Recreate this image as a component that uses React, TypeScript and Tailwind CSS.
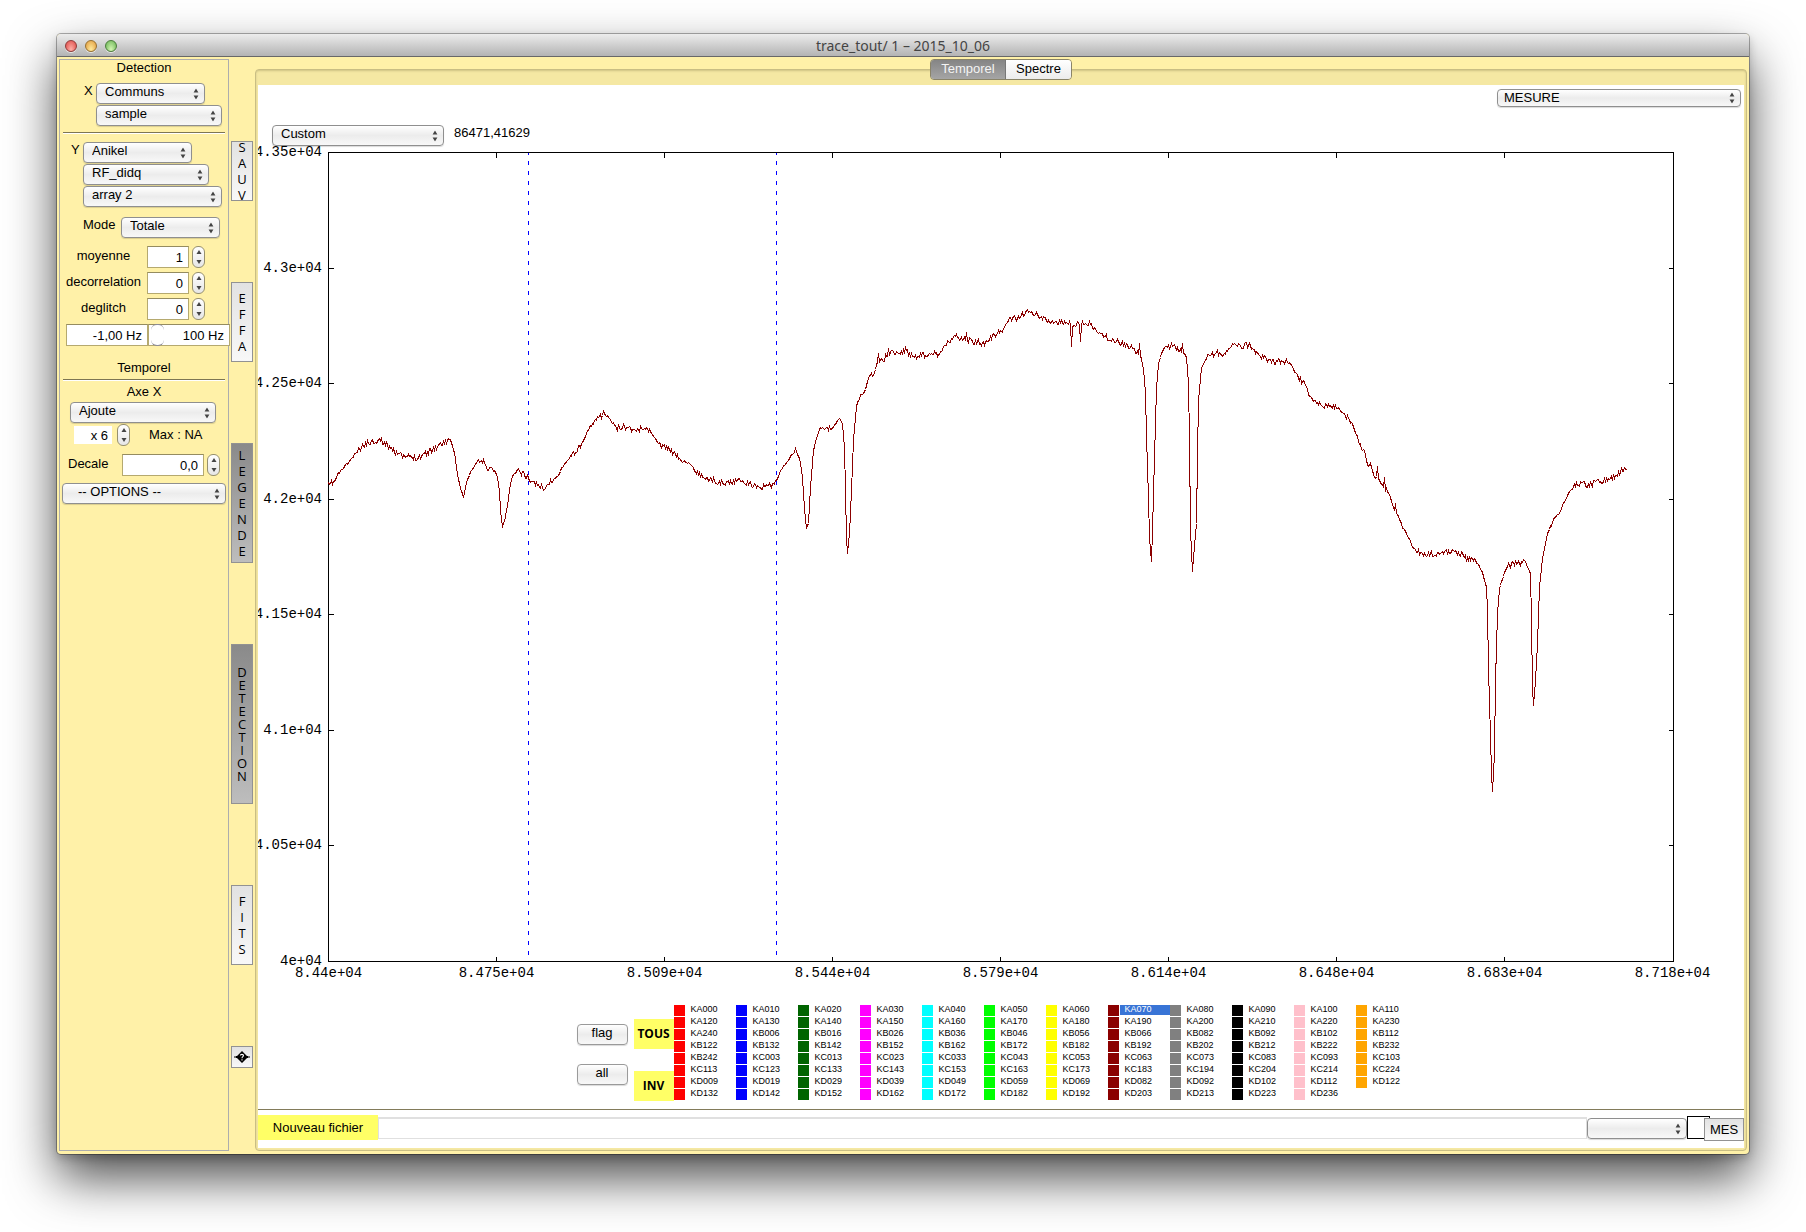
import type { ReactNode } from "react";

const xLabels = ["8.44e+04", "8.475e+04", "8.509e+04", "8.544e+04", "8.579e+04", "8.614e+04", "8.648e+04", "8.683e+04", "8.718e+04"];
const yLabels = ["4.35e+04", "4.3e+04", "4.25e+04", "4.2e+04", "4.15e+04", "4.1e+04", "4.05e+04", "4e+04"];

// plot frame, in chart units
const LEFT = 328.5;
const RIGHT = 1673.5;
const TOP = 152.5;
const BOTTOM = 961.5;

const samples: [number, number][] = [
  [329, 485], [335, 481], [339, 473], [349, 462], [358, 451], [366, 443], [380, 439], [383, 441], [393, 448], [402, 456],
  [418, 457], [431, 450], [448, 440], [452, 443], [455, 452], [458, 474], [461, 488], [464, 497], [467, 482], [472, 470],
  [478, 461], [485, 463], [488, 468], [495, 469], [498, 477], [500, 490], [501, 510], [503, 526], [505, 521], [508, 505],
  [511, 483], [514, 474], [518, 469], [525, 474], [534, 483], [545, 488], [550, 482], [558, 477], [562, 467], [574, 452],
  [581, 447], [588, 431], [597, 418], [605, 413], [610, 419], [617, 427], [628, 426], [636, 430], [647, 427], [653, 434],
  [661, 445], [669, 448], [680, 459], [687, 461], [697, 472], [708, 478], [722, 483], [741, 480], [756, 486], [766, 487],
  [775, 483], [783, 467], [796, 449], [801, 462], [803, 477], [805, 508], [807, 529], [809, 523], [811, 487], [814, 450],
  [817, 437], [821, 428], [832, 429], [840, 418], [843, 423], [845, 447], [846, 490], [847, 537], [848, 553], [850, 533],
  [852, 490], [854, 440], [857, 405], [861, 396], [863, 394], [866, 389], [869, 377], [874, 375], [878, 362], [885, 358],
  [892, 352], [907, 351], [912, 356], [933, 353], [940, 353], [947, 343], [955, 336], [968, 339], [985, 344], [997, 333],
  [1003, 331], [1008, 320], [1013, 318], [1023, 315], [1029, 311], [1042, 317], [1050, 322], [1067, 322], [1071, 324],
  [1072, 346], [1073, 325], [1079, 323], [1080, 325], [1081, 341], [1082, 324], [1090, 323], [1100, 333], [1112, 340],
  [1122, 342], [1135, 349], [1141, 355], [1144, 368], [1146, 392], [1147, 436], [1149, 497], [1150, 537], [1152, 561],
  [1153, 530], [1155, 457], [1157, 388], [1159, 363], [1163, 350], [1173, 344], [1183, 350], [1187, 357], [1189, 383],
  [1190, 440], [1191, 530], [1193, 571], [1194, 557], [1197, 523], [1198, 455], [1199, 400], [1202, 368], [1207, 357],
  [1212, 353], [1218, 353], [1223, 357], [1230, 347], [1235, 344], [1242, 347], [1247, 343], [1257, 353], [1263, 356],
  [1270, 361], [1287, 361], [1293, 367], [1298, 376], [1305, 383], [1310, 395], [1317, 403], [1338, 407], [1348, 418],
  [1352, 422], [1357, 435], [1362, 447], [1365, 450], [1368, 465], [1371, 463], [1375, 477], [1378, 476], [1382, 484],
  [1386, 490], [1390, 494], [1394, 507], [1397, 512], [1403, 527], [1415, 549], [1425, 554], [1438, 553], [1448, 551],
  [1462, 553], [1468, 558], [1475, 559], [1483, 572], [1487, 587], [1488, 610], [1489, 668], [1491, 735], [1492, 773],
  [1493, 791], [1495, 753], [1496, 680], [1498, 613], [1500, 588], [1503, 578], [1507, 567], [1513, 563], [1520, 563],
  [1525, 559], [1528, 567], [1531, 573], [1532, 620], [1533, 687], [1534, 705], [1536, 680], [1538, 643], [1540, 587],
  [1543, 558], [1548, 533], [1555, 518], [1560, 512], [1567, 497], [1576, 483], [1583, 483], [1588, 485], [1595, 482],
  [1610, 480], [1617, 474], [1623, 469], [1628, 468],
];

const spikes: Record<number, number> = {
  484: -6, 535: -5, 879: -7, 889: -9, 906: -6, 967: -6, 1140: -10, 1183: -8, 1378: -9, 1385: -12, 1396: -7, 1467: 5,
};

function buildTrace() {
  let seed = 11;
  const rand = () => {
    seed = (seed * 16807) % 2147483647;
    return seed / 2147483647;
  };
  let d = "";
  for (let i = 0; i < samples.length - 1; i++) {
    const [x0, y0] = samples[i];
    const [x1, y1] = samples[i + 1];
    const slope = Math.abs((y1 - y0) / (x1 - x0));
    const amp = slope > 3 ? 0 : slope > 1 ? 3 : 6;
    for (let x = x0; x < x1; x++) {
      const y = y0 + ((y1 - y0) * (x - x0)) / (x1 - x0) + (rand() - 0.5) * amp + (spikes[x] ?? 0);
      d += `${d ? "L" : "M"}${x - 0.5} ${Math.round(y) + 0.5}`;
    }
  }
  return d;
}

const trace = buildTrace();

const legend = [
  { color: "bg-[#ff0000]", names: ["KA000", "KA120", "KA240", "KB122", "KB242", "KC113", "KD009", "KD132"] },
  { color: "bg-[#0000ff]", names: ["KA010", "KA130", "KB006", "KB132", "KC003", "KC123", "KD019", "KD142"] },
  { color: "bg-[#006400]", names: ["KA020", "KA140", "KB016", "KB142", "KC013", "KC133", "KD029", "KD152"] },
  { color: "bg-[#ff00ff]", names: ["KA030", "KA150", "KB026", "KB152", "KC023", "KC143", "KD039", "KD162"] },
  { color: "bg-[#00ffff]", names: ["KA040", "KA160", "KB036", "KB162", "KC033", "KC153", "KD049", "KD172"] },
  { color: "bg-[#00ff00]", names: ["KA050", "KA170", "KB046", "KB172", "KC043", "KC163", "KD059", "KD182"] },
  { color: "bg-[#ffff00]", names: ["KA060", "KA180", "KB056", "KB182", "KC053", "KC173", "KD069", "KD192"] },
  { color: "bg-[#8b0000]", names: ["KA070", "KA190", "KB066", "KB192", "KC063", "KC183", "KD082", "KD203"] },
  { color: "bg-[#808080]", names: ["KA080", "KA200", "KB082", "KB202", "KC073", "KC194", "KD092", "KD213"] },
  { color: "bg-black", names: ["KA090", "KA210", "KB092", "KB212", "KC083", "KC204", "KD102", "KD223"] },
  { color: "bg-[#ffc0cb]", names: ["KA100", "KA220", "KB102", "KB222", "KC093", "KC214", "KD112", "KD236"] },
  { color: "bg-[#ffa500]", names: ["KA110", "KA230", "KB112", "KB232", "KC103", "KC224", "KD122"] },
];

function Select({ id, label, value, className = "", height = "h-[21px]", pad = "pl-2" }: {
  id: string;
  label?: string;
  value: string;
  className?: string;
  height?: string;
  pad?: string;
}) {
  return (
    <div className={`relative ${className}`}>
      <select
        id={id}
        aria-label={label}
        defaultValue={value}
        className={`block w-full ${height} ${pad} appearance-none rounded border border-[#8f8f8f] bg-linear-to-b from-white via-[#ececec] to-[#f8f8f8] pb-1 text-[13px] leading-4 shadow-[0_1px_1px_rgba(0,0,0,0.15)]`}
      >
        <option>{value}</option>
      </select>
      <svg viewBox="0 0 6 11" className="pointer-events-none absolute right-1.5 top-1/2 h-[11px] w-1.5 -translate-y-1/2" fill="#444">
        <path d="M3 0 5.4 4H.6zM3 11 .6 7h4.8z" />
      </svg>
    </div>
  );
}

function Stepper({ label }: { label: string }) {
  return (
    <span className="flex h-[22px] w-[13px] flex-col overflow-hidden rounded-md border border-[#96906f] bg-linear-to-b from-white to-[#e6e6e6]">
      <button aria-label={`${label} +`} className="flex flex-1 items-center justify-center">
        <svg viewBox="0 0 6 4" className="h-1 w-1.5" fill="#444"><path d="M3 0l2.5 4h-5z" /></svg>
      </button>
      <button aria-label={`${label} -`} className="flex flex-1 items-center justify-center">
        <svg viewBox="0 0 6 4" className="h-1 w-1.5" fill="#444"><path d="M3 4 .5 0h5z" /></svg>
      </button>
    </span>
  );
}

const field = "h-[22px] border border-[#b5a96f] border-t-[#958c60] bg-white pr-[5px] text-right text-[13px] leading-4";

function NumberRow({ id, value }: { id: string; value: string }) {
  return (
    <div className="flex items-center gap-[3px]">
      <label htmlFor={id} className="flex w-[84px] justify-center pb-0.5 pl-[3px]">{id}</label>
      <input id={id} defaultValue={value} className={`${field} w-[42px]`} />
      <Stepper label={id} />
    </div>
  );
}

function Rule() {
  return <div className="mx-[3px] border-b border-t border-b-white border-t-[#7d7653]" />;
}

function SideTab({ text, className, pitch = "leading-4", pressed = false }: {
  text: string;
  className: string;
  pitch?: string;
  pressed?: boolean;
}) {
  const fill = pressed ? "from-[#8a8a8a] to-[#bdbdbd]" : "from-[#e2e2e2] to-[#f8f8f8]";
  return (
    <button
      aria-label={text}
      aria-pressed={pressed}
      className={`flex w-[22px] shrink-0 flex-col items-center justify-center overflow-hidden border border-[#929292] bg-linear-to-b font-['Open_Sans',sans-serif] text-[13px] ${fill} ${pitch} ${className}`}
    >
      {text.split("").map((c, i) => (
        <span key={i}>{c}</span>
      ))}
    </button>
  );
}

function PushButton({ children }: { children: ReactNode }) {
  return (
    <button className="h-[21px] w-[51px] rounded border border-[#9a9a9a] bg-linear-to-b from-white via-[#ececec] to-[#f8f8f8] pb-1 text-[13px] leading-4 shadow-[0_1px_1px_rgba(0,0,0,0.15)]">
      {children}
    </button>
  );
}

function TitleBar() {
  const light = "size-3 rounded-full border shadow-[0_1px_0_rgba(255,255,255,0.6)]";
  return (
    <header className="relative flex h-[23px] items-center rounded-t border-b border-[#686868] bg-linear-to-b from-[#ececec] to-[#b4b4b4] px-2 pt-px">
      <div className="flex gap-2">
        <button aria-label="Fermer" className={`${light} border-[#8e3b39] bg-radial-[at_50%_85%] from-[#ffb1a8] to-[#dc4644]`} />
        <button aria-label="Réduire" className={`${light} border-[#96702f] bg-radial-[at_50%_85%] from-[#ffeb9c] to-[#e0983a]`} />
        <button aria-label="Agrandir" className={`${light} border-[#4c7c3c] bg-radial-[at_50%_85%] from-[#d5f7b4] to-[#65b150]`} />
      </div>
      <h1 className="absolute inset-x-0 top-0 text-center font-['Noto_Sans',sans-serif] text-sm leading-6 text-[#444]">
        trace_tout/ 1 – 2015_10_06
      </h1>
    </header>
  );
}

function Sidebar() {
  return (
    <aside className="w-[170px] shrink-0 border border-[#adadad] leading-4">
      <h2 className="text-center">Detection</h2>
      <div className="mt-[7px] flex pl-6">
        <label htmlFor="x-group" className="w-3">X</label>
        <Select id="x-group" value="Communs" className="w-[109px]" />
      </div>
      <Select id="x-name" label="X variable" value="sample" className="ml-9 mt-px w-[126px]" />
      <div className="mt-1.5"><Rule /></div>
      <div className="mt-2 flex pl-[11px]">
        <label htmlFor="y-group" className="w-3">Y</label>
        <Select id="y-group" value="Anikel" className="w-[109px]" />
      </div>
      <Select id="y-name" label="Y variable" value="RF_didq" className="ml-[23px] mt-px w-[126px]" />
      <Select id="y-array" label="Y array" value="array 2" className="ml-[23px] mt-px w-[139px]" />
      <div className="mt-2.5 flex pl-[23px]">
        <label htmlFor="mode" className="w-[38px]">Mode</label>
        <Select id="mode" value="Totale" className="w-[99px]" />
      </div>
      <div className="mt-2 flex flex-col gap-1">
        <NumberRow id="moyenne" value="1" />
        <NumberRow id="decorrelation" value="0" />
        <NumberRow id="deglitch" value="0" />
      </div>
      <div className="relative ml-1.5 mt-1 flex">
        <input aria-label="Frequence min" defaultValue="-1,00 Hz" className={`${field} w-[82px]`} />
        <input aria-label="Frequence max" defaultValue="100 Hz" className={`${field} w-[82px]`} />
        <span className="pointer-events-none absolute left-[85px] h-[22px] w-[13px] rounded-md border-y border-[#8b8b9b]" />
      </div>
      <h2 className="mt-3.5 text-center">Temporel</h2>
      <div className="mt-[3px]"><Rule /></div>
      <h3 className="mt-[3px] text-center">Axe X</h3>
      <Select id="axe-x" label="Axe X" value="Ajoute" className="ml-2.5 mt-0.5 w-[146px]" />
      <div className="mt-px flex items-center pl-3.5">
        <input aria-label="Facteur" defaultValue="x 6" className="h-[18px] w-[38px] bg-white pr-1 text-right" />
        <span className="ml-[5px]"><Stepper label="Facteur" /></span>
        <span className="ml-[19px]">Max : NA</span>
      </div>
      <div className="mt-2 flex items-center pl-2">
        <label htmlFor="decale" className="w-[54px] pb-0.5">Decale</label>
        <input id="decale" defaultValue="0,0" className={`${field} w-[82px]`} />
        <span className="ml-[3px]"><Stepper label="Decale" /></span>
      </div>
      <Select id="options" label="Options" value="-- OPTIONS --" className="mx-0.5 mt-[7px]" pad="pl-[15px]" />
    </aside>
  );
}

function SideTabs() {
  return (
    <nav className="flex w-[22px] shrink-0 flex-col">
      <SideTab text="SAUV" className="mt-[82px] h-[60px]" />
      <SideTab text="EFFA" className="mt-[81px] h-20" />
      <SideTab text="LEGENDE" className="mt-[81px] h-[120px]" pressed />
      <SideTab text="DETECTION" className="mt-[81px] h-40" pitch="leading-[13px]" pressed />
      <SideTab text="FITS" className="mt-[81px] h-20" />
      <button aria-label="Aide" className="mt-[81px] flex h-[22px] items-center justify-center border border-[#929292] bg-linear-to-b from-[#e2e2e2] to-[#f8f8f8]">
        <svg viewBox="0 0 16 12" className="h-3 w-4">
          <path d="M8 0l6 6-6 6-6-6zM0 5.5h1v1H0zM15 5.5h1v1h-1zM1.5 5h13v2h-13z" />
          <path d="M6.3 4.5C6.5 3 9.5 3 9.5 4.6 9.5 5.7 8 5.7 8 7.2M8 8.2v1.2" fill="none" stroke="#fff" strokeWidth="1.1" />
        </svg>
      </button>
    </nav>
  );
}

function Chart() {
  const dx = 168;
  const dy = (BOTTOM - TOP) / (yLabels.length - 1);
  return (
    <svg viewBox="258 146 1486 836" className="block w-full font-['Liberation_Mono',monospace] text-[14px]">
      <g shapeRendering="crispEdges" fill="none" stroke="#000">
        <rect x={LEFT} y={TOP} width={RIGHT - LEFT} height={BOTTOM - TOP} />
        {xLabels.slice(1, -1).map((label, i) => {
          const x = LEFT + dx * (i + 1);
          return <path key={label} d={`M${x} ${TOP}v5M${x} ${BOTTOM}v-5`} />;
        })}
        {yLabels.slice(1, -1).map((label, i) => {
          const y = Math.floor(TOP + dy * (i + 1)) + 0.5;
          return <path key={label} d={`M${LEFT} ${y}h5M${RIGHT} ${y}h-5`} />;
        })}
        <path d="M528.5 153V961M776.5 153V961" stroke="#0000ff" strokeDasharray="4 6" strokeDashoffset="2" />
        <path d={trace} stroke="#8b0000" />
      </g>
      {xLabels.map((label, i) => (
        <text key={label} x={LEFT + dx * i} y="977" textAnchor="middle">{label}</text>
      ))}
      {yLabels.map((label, i) => (
        <text key={label} x="322" y={Math.floor(TOP + dy * i) + 4} textAnchor="end">{label}</text>
      ))}
    </svg>
  );
}

function Legend() {
  return (
    <section className="mt-[23px] flex h-24 justify-center pr-2">
      <div className="mr-1.5 flex flex-col gap-[19px] pt-[19px]">
        <PushButton>flag</PushButton>
        <PushButton>all</PushButton>
      </div>
      <div className="flex flex-col gap-[22px] pt-3.5 font-['Open_Sans',sans-serif] text-xs font-bold">
        <button className="h-[30px] w-10 bg-[#ffff66]">TOUS</button>
        <button className="h-[30px] w-10 bg-[#ffff66]">INV</button>
      </div>
      <div className="flex">
        {legend.map(({ color, names }) => (
          <ul key={color} className="flex w-[62px] flex-col gap-px text-[9px] leading-[9px]">
            {names.map((name) => (
              <li key={name} className="flex h-[11px]">
                <span className={`mr-px w-[11px] ${color}`} />
                <span className={name === "KA070" ? "h-2.5 flex-1 bg-[#3874d6] pl-[5px] text-white" : "flex-1 pl-[5px]"}>
                  {name}
                </span>
              </li>
            ))}
          </ul>
        ))}
      </div>
    </section>
  );
}

function FileBar() {
  return (
    <footer className="mt-2 flex h-[39px] items-start border-t border-[#827b5a] pt-[5px]">
      <button className="h-[25px] w-[120px] bg-[#ffff66] text-[13px]">Nouveau fichier</button>
      <input aria-label="Fichier" className="mt-0.5 h-[22px] flex-1 border border-t-2 border-[#e0e0e0] bg-white px-1" />
      <Select id="file-type" label="Type" value="" className="mt-[3px] w-[100px]" />
      <div className="mt-px h-[23px] w-[23px] border border-black bg-white" />
      <button className="relative -ml-1.5 mt-[3px] h-[23px] w-10 border border-[#929292] bg-linear-to-b from-[#e2e2e2] to-[#f8f8f8] text-[13px]">MES</button>
    </footer>
  );
}

export default function App() {
  return (
    <div className="min-h-screen bg-white px-[57px] pb-[79px] pt-[34px] font-['Liberation_Sans',sans-serif] text-[13px] text-black">
      <main className="rounded bg-[#fff1a8] shadow-[0_0_0_1px_rgba(0,0,0,0.3),0_24px_50px_rgba(0,0,0,0.7),0_4px_10px_rgba(0,0,0,0.2)]">
        <TitleBar />
        <div className="flex gap-0.5 px-0.5 pb-[3px] pt-0.5">
          <Sidebar />
          <SideTabs />
          <div className="relative flex min-w-0 flex-1 flex-col pt-2.5">
            <div className="flex-1 rounded border border-[#c9be84] bg-[#f5e8a3] px-0.5 pb-0.5 pt-[15px] shadow-[inset_0_1px_2px_rgba(120,110,60,0.3)]">
              <div className="bg-white pt-1">
                <div className="flex justify-end pr-[3px]">
                  <Select id="mesure" label="Mesure" value="MESURE" height="h-[18px]" pad="pl-1.5" className="w-[244px]" />
                </div>
                <div className="mt-[18px] flex pl-3.5">
                  <Select id="zoom" label="Zoom" value="Custom" className="w-[172px]" />
                  <output className="ml-2.5 leading-4">86471,41629</output>
                </div>
                <Chart />
                <Legend />
                <FileBar />
              </div>
            </div>
            <div role="tablist" className="absolute left-1/2 top-0 flex h-[21px] -translate-x-1/2 overflow-hidden rounded border border-[#8a8468] leading-4">
              <button role="tab" aria-selected="true" className="w-[74px] bg-linear-to-b from-[#858585] to-[#a5a5a5] pb-0.5 text-[#f4f4f4]">Temporel</button>
              <button role="tab" aria-selected="false" className="w-[66px] border-l border-[#777] bg-linear-to-b from-white to-[#ececec] pb-0.5">Spectre</button>
            </div>
          </div>
        </div>
      </main>
    </div>
  );
}
